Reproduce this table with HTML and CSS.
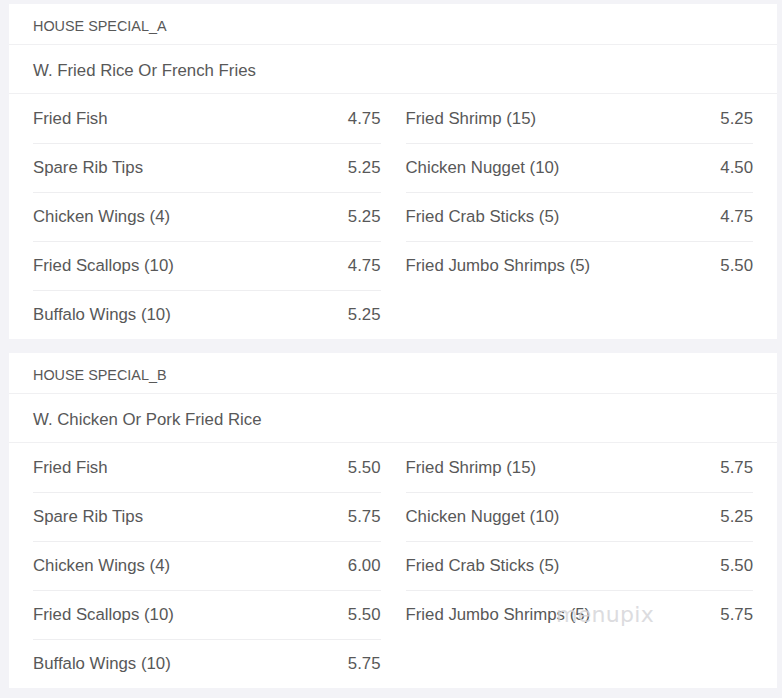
FILE: index.html
```html
<!DOCTYPE html>
<html lang="en">
<head>
    <meta charset="UTF-8">
    <meta name="viewport" content="width=device-width, initial-scale=1.0">
    <title>House Specials</title>
    <link rel="stylesheet" href="styles.css">
</head>
<body>
    <div class="page">
        <div class="menu-card">
            <div class="menu-title">HOUSE SPECIAL_A</div>
            <div class="menu-sub">W. Fried Rice Or French Fries</div>
            <div class="menu-items">
                <div class="col">
                    <div class="item"><span>Fried Fish</span><span>4.75</span></div>
                    <div class="item"><span>Spare Rib Tips</span><span>5.25</span></div>
                    <div class="item"><span>Chicken Wings (4)</span><span>5.25</span></div>
                    <div class="item"><span>Fried Scallops (10)</span><span>4.75</span></div>
                    <div class="item"><span>Buffalo Wings (10)</span><span>5.25</span></div>
                </div>
                <div class="col">
                    <div class="item"><span>Fried Shrimp (15)</span><span>5.25</span></div>
                    <div class="item"><span>Chicken Nugget (10)</span><span>4.50</span></div>
                    <div class="item"><span>Fried Crab Sticks (5)</span><span>4.75</span></div>
                    <div class="item"><span>Fried Jumbo Shrimps (5)</span><span>5.50</span></div>
                </div>
            </div>
        </div>

        <div class="menu-card">
            <div class="menu-title">HOUSE SPECIAL_B</div>
            <div class="menu-sub">W. Chicken Or Pork Fried Rice</div>
            <div class="menu-items">
                <div class="col">
                    <div class="item"><span>Fried Fish</span><span>5.50</span></div>
                    <div class="item"><span>Spare Rib Tips</span><span>5.75</span></div>
                    <div class="item"><span>Chicken Wings (4)</span><span>6.00</span></div>
                    <div class="item"><span>Fried Scallops (10)</span><span>5.50</span></div>
                    <div class="item"><span>Buffalo Wings (10)</span><span>5.75</span></div>
                </div>
                <div class="col">
                    <div class="item"><span>Fried Shrimp (15)</span><span>5.75</span></div>
                    <div class="item"><span>Chicken Nugget (10)</span><span>5.25</span></div>
                    <div class="item"><span>Fried Crab Sticks (5)</span><span>5.50</span></div>
                    <div class="item"><span>Fried Jumbo Shrimps (5)</span><span>5.75</span></div>
                </div>
            </div>
            <div class="watermark">menupix</div>
        </div>
    </div>
</body>
</html>
```

FILE: styles.css
```css
body { margin: 0; background: #f3f3f7; font-family: "Liberation Sans", Arial, sans-serif; color: #585858; }
.page { padding: 4px 5px 10px 9px; display: flex; flex-direction: column; gap: 14px; }
.menu-card { background: #fff; position: relative; }
.menu-title { height: 41px; padding: 3px 24px 0; box-sizing: border-box; display: flex; align-items: center; font-size: 14.4px; border-bottom: 1px solid #f0f0f2; }
.menu-sub { height: 49px; padding: 3px 24px 0; box-sizing: border-box; display: flex; align-items: center; font-size: 16.8px; border-bottom: 1px solid #f0f0f2; }
.menu-items { display: grid; grid-template-columns: 1fr 1fr; column-gap: 25px; padding: 0 24px; align-items: start; }
.item { height: 49px; display: flex; justify-content: space-between; align-items: center; font-size: 16.8px; box-sizing: border-box; }
.item + .item { border-top: 1px solid #eeeef0; }
.watermark { position: absolute; left: 547px; top: 249px; font-size: 22px; color: #d4d4d8; opacity: 0.8; letter-spacing: 0.3px; font-family: "DejaVu Sans", sans-serif; }
```
